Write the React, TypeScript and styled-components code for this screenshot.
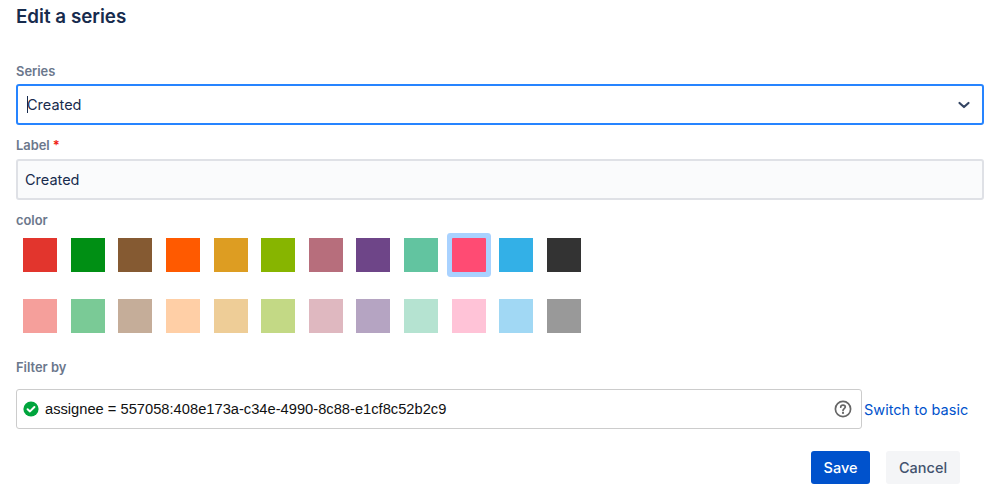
import React from 'react'
import styled, { createGlobalStyle } from 'styled-components'

const Global = createGlobalStyle`
    html, body {
        margin: 0;
        padding: 0;
        background: #fff;
        font-family: Inter, "Liberation Sans", sans-serif;
    }
`

const Page = styled.div`
    width: 999px;
    height: 492px;
    box-sizing: border-box;
    padding: 5px 15px 0 16px;
    overflow: hidden;
`

const Title = styled.div`
    height: 24px;
    font-size: 18.8px;
    line-height: 24px;
    font-weight: 600;
    color: #172b4d;
`

const FieldLabel = styled.div<{ $top: number }>`
    margin-top: ${(p) => p.$top}px;
    height: 16px;
    font-size: 12.9px;
    line-height: 16px;
    font-weight: 600;
    color: #6b778c;
`

const Required = styled.span`
    margin-left: 3px;
    color: #f01e14;
`

const SelectBox = styled.div`
    margin-top: 4px;
    height: 41px;
    box-sizing: border-box;
    display: flex;
    align-items: center;
    justify-content: space-between;
    padding: 0 10px 0 9px;
    border: 2px solid #2684ff;
    border-radius: 3px;
    background: #fff;
    font-size: 14.5px;
    color: #172b4d;
`

const Caret = styled.span`
    display: inline-block;
    width: 1px;
    height: 17px;
    margin-right: -1px;
    vertical-align: -3px;
    background: #172b4d;
`

const TextInput = styled.div`
    margin-top: 5px;
    height: 41px;
    box-sizing: border-box;
    display: flex;
    align-items: center;
    padding: 0 7px;
    border: 2px solid #dfe1e6;
    border-radius: 3px;
    background: #fafbfc;
    font-size: 14.5px;
    color: #172b4d;
`

const Palette = styled.div`
    display: grid;
    grid-template-columns: repeat(12, 34px);
    column-gap: 13.64px;
    row-gap: 27px;
    margin: 9px 0 0 7px;
`

const Swatch = styled.div<{ $color: string; $selected?: boolean }>`
    width: 34px;
    height: 34px;
    background: ${(p) => p.$color};
    box-shadow: ${(p) => (p.$selected ? '0 0 0 5px #a9d2ff' : 'none')};
    border-radius: ${(p) => (p.$selected ? '1px' : '0')};
`

const FilterRow = styled.div`
    margin-top: 13px;
    display: flex;
    align-items: center;
`

const FilterBox = styled.div`
    width: 846px;
    height: 40px;
    box-sizing: border-box;
    display: flex;
    align-items: center;
    padding: 0 9px 0 6px;
    border: 1px solid #ccc;
    border-radius: 3px;
    background: #fff;
`

const FilterText = styled.div`
    flex: 1;
    margin-left: 6px;
    font-family: "Liberation Sans", Arial, sans-serif;
    font-size: 14.7px;
    color: #111;
`

const SwitchLink = styled.a`
    margin-left: 2px;
    font-size: 14.5px;
    color: #0052cc;
    white-space: nowrap;
`

const Actions = styled.div`
    margin-top: 22px;
    padding-right: 24px;
    display: flex;
    justify-content: flex-end;
    gap: 16px;
`

const Button = styled.button<{ $primary?: boolean }>`
    height: 33px;
    padding: 0;
    width: ${(p) => (p.$primary ? '59px' : '74px')};
    border: 0;
    border-radius: 3px;
    font-family: inherit;
    font-size: 14.5px;
    font-weight: 500;
    color: ${(p) => (p.$primary ? '#fff' : '#42526e')};
    background: ${(p) => (p.$primary ? '#0052cc' : '#f4f5f7')};
`

const darkColors = ['#e2352d', '#008f14', '#855a32', '#ff5a00', '#dd9d22', '#87b500', '#b76e7c', '#6e4588', '#62c4a0', '#ff4b73', '#33b0e7', '#333333']
const lightColors = ['#f59f9b', '#7aca96', '#c5ad99', '#ffcfa6', '#eecd97', '#c3d985', '#dfb8c0', '#b5a4c2', '#b5e3d1', '#ffc3d7', '#a1d8f4', '#999999']

export default function App() {
    return (
        <Page>
            <Global />
            <Title>Edit a series</Title>

            <FieldLabel $top={35}>Series</FieldLabel>
            <SelectBox>
                <div><Caret />Created</div>
                <svg width="16" height="16" viewBox="0 0 16 16" fill="none">
                    <path d="M3.5 6L8 10L12.5 6" stroke="#344563" strokeWidth="2.2" strokeLinecap="round" strokeLinejoin="round" />
                </svg>
            </SelectBox>

            <FieldLabel $top={13}>Label<Required>*</Required></FieldLabel>
            <TextInput>Created</TextInput>

            <FieldLabel $top={13}>color</FieldLabel>
            <Palette>
                {darkColors.map((color) => (
                    <Swatch key={color} $color={color} $selected={color === '#ff4b73'} />
                ))}
                {lightColors.map((color) => (
                    <Swatch key={color} $color={color} />
                ))}
            </Palette>

            <FieldLabel $top={27}>Filter by</FieldLabel>
            <FilterRow>
                <FilterBox>
                    <svg width="16" height="16" viewBox="0 0 16 16">
                        <circle cx="8" cy="8" r="7.6" fill="#00a53d" />
                        <path d="M4.6 8.2L7 10.4L11.4 6" fill="none" stroke="#fff" strokeWidth="2" strokeLinecap="round" strokeLinejoin="round" />
                    </svg>
                    <FilterText>assignee = 557058:408e173a-c34e-4990-8c88-e1cf8c52b2c9</FilterText>
                    <svg width="18" height="18" viewBox="0 0 18 18" fill="none">
                        <circle cx="9" cy="9" r="7.6" stroke="#666" strokeWidth="1.7" />
                        <path d="M6.7 7.2C6.7 5.9 7.7 5.1 9 5.1C10.3 5.1 11.3 5.9 11.3 7.1C11.3 8.6 9 8.7 9 10.5" stroke="#666" strokeWidth="1.7" strokeLinecap="round" />
                        <circle cx="9" cy="12.9" r="1.1" fill="#666" />
                    </svg>
                </FilterBox>
                <SwitchLink>Switch to basic</SwitchLink>
            </FilterRow>

            <Actions>
                <Button $primary>Save</Button>
                <Button>Cancel</Button>
            </Actions>
        </Page>
    )
}
